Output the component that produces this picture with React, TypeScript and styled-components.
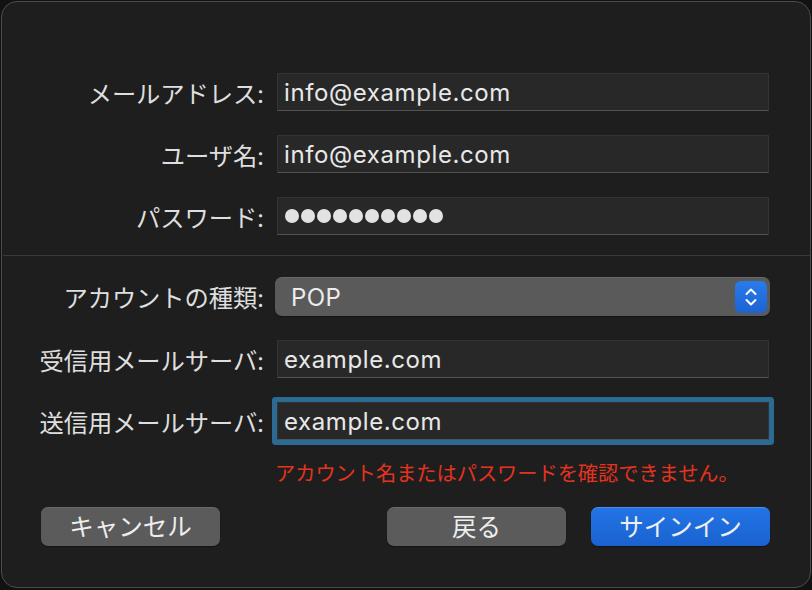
import styled, { createGlobalStyle } from "styled-components";

type FieldProps = {
  focused?: boolean;
};

type ButtonProps = {
  primary?: boolean;
};

const GlobalStyle = createGlobalStyle`
  html, body {
    margin: 0;
    padding: 0;
    background: #121212;
  }
  body {
    font-family: Inter, "Noto Sans CJK JP", "Noto Sans", sans-serif;
    -webkit-font-smoothing: antialiased;
  }
`;

const Window = styled.div`
  box-sizing: border-box;
  width: 810px;
  height: 587px;
  margin: 1px;
  background: #1e1e1e;
  border: 1px solid #4b4b4b;
  border-radius: 16px;
  display: flex;
  flex-direction: column;
`;

const Section = styled.div<{ top: number; bottom: number }>`
  display: grid;
  grid-template-columns: 262px 492px;
  column-gap: 13px;
  row-gap: 24px;
  align-items: center;
  padding-top: ${({ top }) => top}px;
  padding-bottom: ${({ bottom }) => bottom}px;
`;

const Label = styled.div`
  text-align: right;
  font-size: 24.3px;
  color: #dedede;
  white-space: nowrap;
  letter-spacing: -0.1px;
`;

const Field = styled.div<FieldProps>`
  box-sizing: border-box;
  height: 38px;
  background: #282828;
  border: 1px solid #333333;
  border-bottom-color: #525252;
  border-radius: 1px;
  padding: 0 6px;
  display: flex;
  align-items: center;
  font-size: 24px;
  letter-spacing: 0.6px;
  color: #e8e8e8;
  box-shadow: ${({ focused }) => (focused ? "0 0 0 5px #2b6a93" : "none")};
`;

const Dots = styled.div`
  display: flex;
  gap: 2px;
  padding-left: 1px;
`;

const Dot = styled.span`
  width: 14px;
  height: 14px;
  border-radius: 50%;
  background: #e3e3e3;
`;

const Separator = styled.div`
  height: 1px;
  background: #3a3a3a;
  margin-left: 1px;
`;

const Select = styled.div`
  box-sizing: border-box;
  height: 39px;
  margin: 0 -1px 0 -2px;
  background: #5a5a5a;
  border-top: 1px solid #666666;
  border-radius: 7px;
  display: flex;
  align-items: center;
  justify-content: space-between;
  padding: 0 3px 0 16px;
  font-size: 24px;
  letter-spacing: 0.4px;
  color: #ececec;
  box-shadow: 0 1px 1px rgba(0, 0, 0, 0.35);
`;

const Stepper = styled.div`
  width: 32px;
  height: 32px;
  border-radius: 6px;
  background: linear-gradient(#2a7bea, #1c63d3);
  display: flex;
  align-items: center;
  justify-content: center;
`;

const ErrorText = styled.div`
  grid-column: 2;
  margin: -2px 0 0 -2px;
  font-size: 20.2px;
  line-height: 24px;
  color: #e5331f;
  white-space: nowrap;
`;

const Footer = styled.div`
  display: flex;
  justify-content: space-between;
  padding: 21px 40px 0 39px;
`;

const ButtonGroup = styled.div`
  display: flex;
  gap: 25px;
`;

const Button = styled.div<ButtonProps>`
  box-sizing: border-box;
  width: 179px;
  height: 39px;
  padding-bottom: 3px;
  border-radius: 7px;
  display: flex;
  align-items: center;
  justify-content: center;
  font-size: 24.5px;
  color: #eeeeee;
  background: ${({ primary }) =>
    primary ? "linear-gradient(#2274e6, #1a62d0)" : "#5b5b5b"};
  border-top: 1px solid ${({ primary }) => (primary ? "#4a8ef0" : "#6a6a6a")};
  box-shadow: 0 1px 1px rgba(0, 0, 0, 0.4);
`;

function StepperIcon() {
  return (
    <svg width="14" height="22" viewBox="0 0 14 22" fill="none">
      <path
        d="M2.5 8 L7 3.5 L11.5 8"
        stroke="#ffffff"
        strokeWidth="2"
        strokeLinecap="round"
        strokeLinejoin="round"
      />
      <path
        d="M2.5 14 L7 18.5 L11.5 14"
        stroke="#ffffff"
        strokeWidth="2"
        strokeLinecap="round"
        strokeLinejoin="round"
      />
    </svg>
  );
}

export default function App() {
  return (
    <>
      <GlobalStyle />
      <Window>
        <Section top={71} bottom={20}>
          <Label>メールアドレス:</Label>
          <Field>info@example.com</Field>
          <Label>ユーザ名:</Label>
          <Field>info@example.com</Field>
          <Label>パスワード:</Label>
          <Field>
            <Dots>
              {Array.from({ length: 10 }).map((_, i) => (
                <Dot key={i} />
              ))}
            </Dots>
          </Field>
        </Section>
        <Separator />
        <Section top={21} bottom={0}>
          <Label>アカウントの種類:</Label>
          <Select>
            POP
            <Stepper>
              <StepperIcon />
            </Stepper>
          </Select>
          <Label>受信用メールサーバ:</Label>
          <Field>example.com</Field>
          <Label>送信用メールサーバ:</Label>
          <Field focused>example.com</Field>
          <ErrorText>アカウント名またはパスワードを確認できません。</ErrorText>
        </Section>
        <Footer>
          <Button>キャンセル</Button>
          <ButtonGroup>
            <Button>戻る</Button>
            <Button primary>サインイン</Button>
          </ButtonGroup>
        </Footer>
      </Window>
    </>
  );
}
